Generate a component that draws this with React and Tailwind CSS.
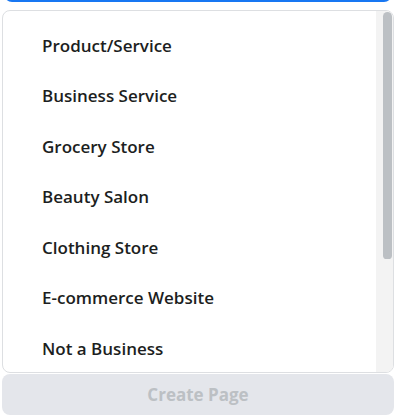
export default function App() {
  const items = [
    "Product/Service",
    "Business Service",
    "Grocery Store",
    "Beauty Salon",
    "Clothing Store",
    "E-commerce Website",
    "Not a Business",
  ];
  return (
    <div
      className="w-[396px] h-[419px] bg-white overflow-hidden relative"
      style={{ fontFamily: '"Open Sans", "Noto Sans", sans-serif' }}
    >
      <div className="h-[2px] overflow-hidden mx-[4px]">
        <div className="h-[40px] -mt-[38px] border-2 border-[#1877f2] rounded-lg"></div>
      </div>
      <div className="mt-[8px] mx-[2px] h-[363px] border border-[#dddfe2] rounded-lg flex overflow-hidden bg-white">
        <div className="flex-1 flex flex-col pt-[9px]">
          {items.map((t) => (
            <div
              key={t}
              className="h-[50.5px] shrink-0 flex items-center pl-[39px] text-[17px] font-[560] text-[#1c1e21]"
            >
              {t}
            </div>
          ))}
        </div>
        <div className="w-[17px] shrink-0 bg-[#f3f3f3] pt-[1px] pl-[7px] pr-[1px]">
          <div className="h-[247px] bg-[#bcc0c4] rounded-t-[5px] rounded-b-[4px]"></div>
        </div>
      </div>
      <div className="mt-[1px] mx-[2px] h-[41px] rounded-lg bg-[#e4e6eb] flex items-center justify-center text-[17px] font-bold text-[#bcc0c4]">
        Create Page
      </div>
    </div>
  );
}
